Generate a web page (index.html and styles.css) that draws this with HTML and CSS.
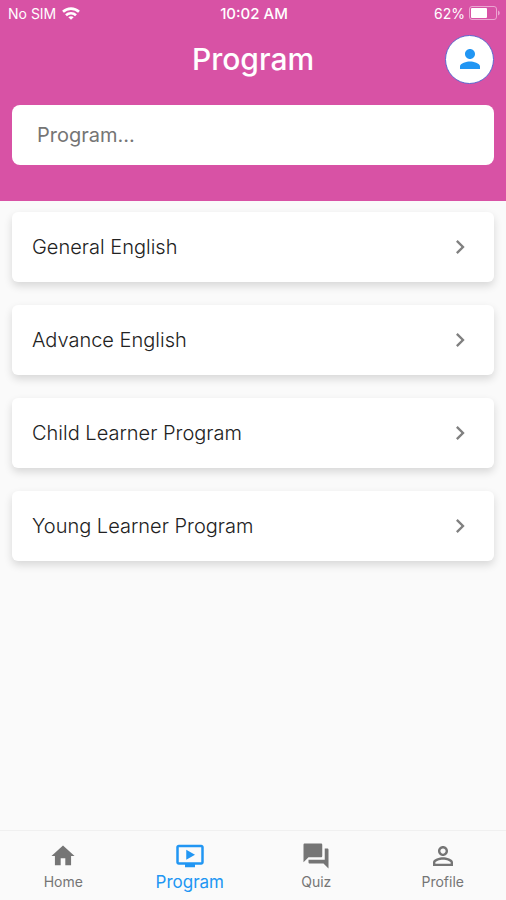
FILE: index.html
```html
<!DOCTYPE html>
<html lang="en">
<head>
<meta charset="utf-8">
<meta name="viewport" content="width=device-width, initial-scale=1">
<title>Program</title>
<link rel="stylesheet" href="styles.css">
</head>
<body>
<header class="header">
  <div class="status">
    <div class="status-left">
      <span>No SIM</span>
      <svg width="18" height="13" viewBox="0 0 18 13" fill="none" stroke="currentColor" stroke-width="2.600" aria-hidden="true">
        <path d="M1 4.800C5.500 .5 12.500 .5 17 4.800M4 8.200C6.800 5.500 11.200 5.500 14 8.200"/>
        <path d="M9 12.800L6.300 10.200C7.800 8.900 10.200 8.900 11.700 10.200Z" fill="currentColor" stroke="none"/>
      </svg>
    </div>
    <time class="clock">10:02 AM</time>
    <div class="status-right">
      <span>62%</span>
      <svg width="31" height="14" viewBox="0 0 31 14" aria-hidden="true">
        <rect x=".5" y=".5" width="27" height="13" rx="2.500" fill="none" stroke="#eba5d2"/>
        <rect x="2" y="2" width="16" height="10" rx="1" fill="#fff"/>
        <path d="M29 4.500C31.300 5.200 31.300 8.800 29 9.500Z" fill="#eba5d2"/>
      </svg>
    </div>
  </div>
  <div class="title-row">
    <h1 class="title">Program</h1>
    <button class="avatar" type="button" aria-label="Account">
      <svg class="icon" viewBox="0 0 24 24" aria-hidden="true"><path d="M12 12c2.210 0 4-1.790 4-4s-1.790-4-4-4-4 1.790-4 4 1.790 4 4 4zm0 2c-2.670 0-8 1.340-8 4v2h16v-2c0-2.660-5.330-4-8-4z"/></svg>
    </button>
  </div>
  <input class="search" type="text" placeholder="Program..." aria-label="Search programs">
</header>
<main class="list">
  <a class="card" href="#general"><span>General English</span><svg class="chevron" viewBox="0 0 24 24" aria-hidden="true"><path d="M10 6L8.590 7.410 13.170 12l-4.580 4.590L10 18l6-6z"/></svg></a>
  <a class="card" href="#advance"><span>Advance English</span><svg class="chevron" viewBox="0 0 24 24" aria-hidden="true"><path d="M10 6L8.590 7.410 13.170 12l-4.580 4.590L10 18l6-6z"/></svg></a>
  <a class="card" href="#child"><span>Child Learner Program</span><svg class="chevron" viewBox="0 0 24 24" aria-hidden="true"><path d="M10 6L8.590 7.410 13.170 12l-4.580 4.590L10 18l6-6z"/></svg></a>
  <a class="card" href="#young"><span>Young Learner Program</span><svg class="chevron" viewBox="0 0 24 24" aria-hidden="true"><path d="M10 6L8.590 7.410 13.170 12l-4.580 4.590L10 18l6-6z"/></svg></a>
</main>
<nav class="tabs">
  <a class="tab" href="#home"><svg class="icon" viewBox="-1 -1 26 26" aria-hidden="true"><path d="M10 20v-6h4v6h5v-8h3L12 3 2 12h3v8z"/></svg><span>Home</span></a>
  <a class="tab active" href="#program" aria-current="page"><svg class="icon" viewBox="0 0 24 24" aria-hidden="true"><path d="M21 3H3c-1.110 0-2 .89-2 2v12c0 1.100.89 2 2 2h5v2h8v-2h5c1.100 0 1.990-.9 1.990-2L23 5c0-1.110-.9-2-2-2zm0 14H3V5h18v12zm-5-6l-7 4V7z"/></svg><span>Program</span></a>
  <a class="tab" href="#quiz"><svg class="icon" viewBox="0 0 24 24" aria-hidden="true"><path d="M21 6h-2v9H6v2c0 .55.45 1 1 1h11l4 4V7c0-.55-.45-1-1-1zm-4 6V3c0-.55-.45-1-1-1H3c-.55 0-1 .45-1 1v14l4-4h10c.55 0 1-.45 1-1z"/></svg><span>Quiz</span></a>
  <a class="tab" href="#profile"><svg class="icon" viewBox="0 0 24 24" aria-hidden="true"><path d="M12 5.900c1.160 0 2.100.94 2.100 2.100s-.94 2.100-2.100 2.100S9.900 9.160 9.900 8s.94-2.100 2.100-2.100m0 9c2.970 0 6.100 1.460 6.100 2.100v1.100H5.900V17c0-.64 3.130-2.100 6.100-2.100M12 4C9.790 4 8 5.790 8 8s1.790 4 4 4 4-1.790 4-4-1.790-4-4-4zm0 9c-2.670 0-8 1.340-8 4v3h16v-3c0-2.660-5.330-4-8-4z"/></svg><span>Profile</span></a>
</nav>
</body>
</html>
```
FILE: styles.css
```css
* {
  box-sizing: border-box;
}

body {
  margin: 0;
  min-height: 100vh;
  display: flex;
  flex-direction: column;
  background: #fafafa;
  color: #222;
  font-family: Inter, "Liberation Sans", sans-serif;
}

a {
  color: inherit;
  text-decoration: none;
}

.header {
  padding: 0 12px 36px;
  background: #d852a5;
  color: #fff;
}

.status {
  display: grid;
  grid-template-columns: 1fr auto 1fr;
  align-items: center;
  height: 26px;
  margin: 0 -6px 0 -4px;
  font-size: 14px;
}

.status-left,
.status-right {
  display: flex;
  align-items: center;
  gap: 6px;
}

.status-right {
  justify-content: flex-end;
  gap: 4px;
}

.clock {
  font-size: 15px;
  font-weight: 500;
}

.title-row {
  display: grid;
  grid-template-columns: 1fr auto 1fr;
  align-items: center;
  height: 66px;
  margin-bottom: 13px;
}

.title {
  grid-column: 2;
  margin: 0;
  font-size: 30px;
  font-weight: 500;
}

.avatar {
  justify-self: end;
  display: grid;
  place-items: center;
  width: 49px;
  height: 49px;
  padding: 0;
  border: 1px solid #5b68cf;
  border-radius: 50%;
  background: #fff;
  color: #2196f3;
}

.icon {
  display: block;
  width: 30px;
  height: 30px;
  fill: currentColor;
}

.search {
  display: block;
  width: 100%;
  height: 60px;
  padding: 0 25px;
  border: 0;
  border-radius: 8px;
  background: #fff;
  color: #222;
  font: inherit;
  font-size: 20px;
}

.search::placeholder {
  color: #757575;
  opacity: 1;
}

.list {
  flex: 1;
  display: flex;
  flex-direction: column;
  gap: 23px;
  padding: 11px 12px;
}

.card {
  display: flex;
  align-items: center;
  justify-content: space-between;
  height: 70px;
  padding: 0 20px;
  border-radius: 6px;
  background: #fff;
  box-shadow: 0 4px 8px rgba(0, 0, 0, 0.14);
  font-size: 20px;
  font-weight: 300;
}

.chevron {
  width: 28px;
  height: 28px;
  fill: #808080;
}

.tabs {
  display: grid;
  grid-template-columns: repeat(4, 1fr);
  height: 70px;
  border-top: 1px solid #f0f0f0;
}

.tab {
  display: flex;
  flex-direction: column;
  align-items: center;
  padding-top: 10px;
  color: #757575;
  font-size: 14px;
  line-height: 22px;
}

.active {
  color: #2196f3;
  font-size: 17px;
}
```
